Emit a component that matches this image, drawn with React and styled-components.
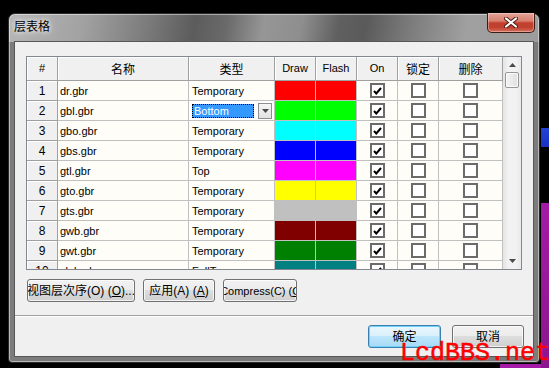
import React from "react";
import styled, { createGlobalStyle } from "styled-components";

const GlobalStyle = createGlobalStyle`
  * {
    box-sizing: border-box;
  }
  html, body {
    margin: 0;
    padding: 0;
    background: #000;
  }
  body {
    font-family: "Liberation Sans", "Noto Sans CJK SC", sans-serif;
  }
`;

const headers = [
  { label: "#", latin: true },
  { label: "名称" },
  { label: "类型" },
  { label: "Draw", latin: true },
  { label: "Flash", latin: true },
  { label: "On", latin: true },
  { label: "锁定" },
  { label: "删除" },
];

const layers = [
  { name: "dr.gbr", type: "Temporary", color: "#ff0000" },
  { name: "gbl.gbr", type: "Bottom", color: "#00ff00", editing: true },
  { name: "gbo.gbr", type: "Temporary", color: "#00ffff" },
  { name: "gbs.gbr", type: "Temporary", color: "#0000ff" },
  { name: "gtl.gbr", type: "Top", color: "#ff00ff" },
  { name: "gto.gbr", type: "Temporary", color: "#ffff00" },
  { name: "gts.gbr", type: "Temporary", color: "#c0c0c0" },
  { name: "gwb.gbr", type: "Temporary", color: "#800000" },
  { name: "gwt.gbr", type: "Temporary", color: "#008000" },
  { name: "slab.gbr", type: "FullTemp", color: "#008080" },
];

const CheckBox = ({ checked }) => (
  <Box>
    {checked && (
      <svg width="9" height="8" viewBox="0 0 9 8">
        <path d="M1 4 L3.3 6.5 L8 1" fill="none" stroke="#000" strokeWidth="2" />
      </svg>
    )}
  </Box>
);

const Arrow = ({ down }) => (
  <svg width="7" height="4" viewBox="0 0 7 4">
    <path d={down ? "M0 0 H7 L3.5 4 Z" : "M0 4 H7 L3.5 0 Z"} fill="#4a4a4a" />
  </svg>
);

const App = () => {
  return (
    <>
      <GlobalStyle />
      <Screen>
        <Window>
          <TitleBar>
            <Title>层表格</Title>
            <CloseButton>
              <svg width="14" height="11" viewBox="0 0 14 11">
                <path d="M2 1.5 L12 9.5 M12 1.5 L2 9.5" stroke="#4a1a12" strokeWidth="4" strokeLinecap="round" />
                <path d="M2 1.5 L12 9.5 M12 1.5 L2 9.5" stroke="#fff" strokeWidth="2.2" strokeLinecap="round" />
              </svg>
            </CloseButton>
          </TitleBar>
          <Client>
            <TopPane>
              <Table>
                <Grid>
                  {headers.map((h) => (
                    <HeadCell key={h.label} $latin={h.latin}>
                      {h.label}
                    </HeadCell>
                  ))}
                  {layers.map((l, i) => (
                    <React.Fragment key={l.name}>
                      <RowHead>{i + 1}</RowHead>
                      <Cell>{l.name}</Cell>
                      {l.editing ? (
                        <ComboCell>
                          <ComboText>{l.type}</ComboText>
                          <DropButton>
                            <Arrow down />
                          </DropButton>
                        </ComboCell>
                      ) : (
                        <Cell $pad={3}>{l.type}</Cell>
                      )}
                      <ColorCell $color={l.color} />
                      <ColorCell $color={l.color} />
                      <CheckCell>
                        <CheckBox checked />
                      </CheckCell>
                      <CheckCell>
                        <CheckBox />
                      </CheckCell>
                      <CheckCell>
                        <CheckBox />
                      </CheckCell>
                    </React.Fragment>
                  ))}
                </Grid>
                <ScrollBar>
                  <ScrollArrow $h={15}>
                    <Arrow />
                  </ScrollArrow>
                  <Thumb />
                  <Track />
                  <ScrollArrow $h={17}>
                    <Arrow down />
                  </ScrollArrow>
                </ScrollBar>
              </Table>
              <ButtonRow>
                <PushButton $w={108}>
                  视图层次序(O) (<u>O</u>)...
                </PushButton>
                <PushButton $w={72}>
                  应用(A) (<u>A</u>)
                </PushButton>
                <PushButton $w={74} $padLeft={4} $size={11}>
                  Compress(C) (<u>C</u>)
                </PushButton>
              </ButtonRow>
            </TopPane>
            <BottomPane>
              <PushButton $w={73} $default>
                确定
              </PushButton>
              <PushButton $w={72}>取消</PushButton>
            </BottomPane>
          </Client>
        </Window>
        <Watermark>LcdBBS.net</Watermark>
      </Screen>
    </>
  );
};

export default App;

const Screen = styled.div`
  position: relative;
  width: 549px;
  height: 368px;
  overflow: hidden;
  padding: 13px 0 0 8px;
  background:
    linear-gradient(#a31ba6, #8c168f) 541px 203px / 8px 165px no-repeat,
    linear-gradient(#a31ba6, #a31ba6) 500px 364px / 49px 4px no-repeat,
    linear-gradient(#2442d6, #1a30c0) 541px 128px / 8px 19px no-repeat,
    #000;
`;

const Window = styled.div`
  width: 532px;
  height: 350px;
  display: flex;
  flex-direction: column;
  padding: 0 5px 5px;
  border: 1px solid #2a2a2a;
  border-radius: 7px 7px 4px 4px;
  background:
    linear-gradient(100deg, #b6b6b6 0%, #a2a2a2 14%, #7c7c7c 26%, #5c5c5c 35%, #6a6a6a 41%, #969696 48%, #8e8e8e 55%, #606060 62%, #5a5a5a 67%, #7a7a7a 75%, #a0a0a0 86%, #9c9c9c 100%) 0 0 / 100% 28px no-repeat,
    #7c7c7c;
  box-shadow: inset 0 0 0 1px rgba(255, 255, 255, 0.45);
`;

const TitleBar = styled.div`
  height: 27px;
  display: flex;
  justify-content: space-between;
  align-items: flex-start;
`;

const Title = styled.div`
  margin-top: 5px;
  font: 12px/14px "Noto Sans CJK SC", sans-serif;
  color: #000;
  text-shadow: 0 0 4px #fff, 0 0 8px rgba(255, 255, 255, 0.8);
`;

const CloseButton = styled.div`
  width: 48px;
  height: 20px;
  margin: -1px -1px 0 0;
  border: 1px solid #3d1c16;
  border-top: none;
  border-radius: 0 0 5px 5px;
  background: linear-gradient(#e4a497 0%, #d88070 42%, #c3402e 52%, #c0402f 75%, #d8705c 100%);
  box-shadow: inset 0 0 0 1px rgba(255, 255, 255, 0.35);
  display: flex;
  align-items: center;
  justify-content: center;
`;

const Client = styled.div`
  flex: 1;
  display: flex;
  flex-direction: column;
  background: #f0f0f0;
  border: 1px solid #575757;
`;

const TopPane = styled.div`
  padding: 14px 11px 13px;
  border-bottom: 1px solid #a0a0a0;
`;

const Table = styled.div`
  width: 496px;
  height: 214px;
  display: flex;
  border: 1px solid #828790;
  overflow: hidden;
`;

const Grid = styled.div`
  display: grid;
  grid-template-columns: 31px 131px 86px 41px 41px 41px 41px 64px;
  grid-template-rows: 24px;
  grid-auto-rows: 20px;
  align-content: start;
  overflow: hidden;
`;

const HeadCell = styled.div`
  display: flex;
  align-items: center;
  justify-content: center;
  background: #f0f0f0;
  border-right: 1px solid #a0a0a0;
  border-bottom: 1px solid #a0a0a0;
  box-shadow: inset 1px 1px 0 #fff;
  font-size: ${(p) => (p.$latin ? "11px" : "12px")};
  font-family: ${(p) => (p.$latin ? '"Liberation Sans", sans-serif' : '"Noto Sans CJK SC", sans-serif')};
  color: #000;
  line-height: 1;
`;

const RowHead = styled(HeadCell)`
  font-family: "Liberation Sans", sans-serif;
  font-size: 12px;
`;

const Cell = styled.div`
  display: flex;
  align-items: center;
  padding-left: ${(p) => p.$pad || 2}px;
  background: #fffdf7;
  border-right: 1px solid #c0c0c0;
  border-bottom: 1px solid #c0c0c0;
  font-size: 11px;
  color: #000;
  white-space: nowrap;
  overflow: hidden;
`;

const ComboCell = styled(Cell)`
  padding-left: 3px;
  background: #fff;
`;

const ComboText = styled.span`
  width: 62px;
  height: 14px;
  padding-left: 1px;
  display: flex;
  align-items: center;
  background: #3399ff;
  color: #fff;
  border: 1px dotted #000;
  font-size: 11px;
`;

const DropButton = styled.span`
  width: 14px;
  height: 16px;
  margin-left: 4px;
  display: flex;
  align-items: center;
  justify-content: center;
  border: 1px solid #8e8e8e;
  background: linear-gradient(#f6f6f6, #e2e2e2);
`;

const ColorCell = styled.div`
  background: ${(p) => p.$color};
  border-right: 1px solid #c0c0c0;
  border-bottom: 1px solid #c0c0c0;
`;

const CheckCell = styled.div`
  display: flex;
  align-items: center;
  justify-content: center;
  background: #fffdf7;
  border-right: 1px solid #c0c0c0;
  border-bottom: 1px solid #c0c0c0;
`;

const Box = styled.span`
  width: 15px;
  height: 15px;
  display: flex;
  align-items: center;
  justify-content: center;
  border: 2px solid #6b6b6b;
  background: #fff;
`;

const ScrollBar = styled.div`
  width: 18px;
  display: flex;
  flex-direction: column;
  align-items: center;
  background: linear-gradient(90deg, #e4e4e4, #f2f2f2 30%, #f2f2f2 70%, #e9e9e9);
`;

const ScrollArrow = styled.div`
  height: ${(p) => p.$h}px;
  width: 100%;
  display: flex;
  align-items: center;
  justify-content: center;
`;

const Thumb = styled.div`
  width: 14px;
  height: 16px;
  border: 1px solid #979797;
  border-radius: 2px;
  background: linear-gradient(90deg, #f4f4f4, #e0e0e0);
  box-shadow: inset 0 0 0 1px rgba(255, 255, 255, 0.8);
`;

const Track = styled.div`
  flex: 1;
`;

const ButtonRow = styled.div`
  display: flex;
  gap: 8px;
  margin: 9px 0 0 1px;
`;

const PushButton = styled.button`
  width: ${(p) => p.$w}px;
  height: 23px;
  padding: 0 0 0 ${(p) => p.$padLeft || 0}px;
  display: flex;
  align-items: center;
  justify-content: center;
  overflow: hidden;
  white-space: nowrap;
  border: 1px solid ${(p) => (p.$default ? "#3c7fb1" : "#707070")};
  border-radius: 3px;
  background: ${(p) =>
    p.$default
      ? "linear-gradient(#eaf6fd 0%, #d9f0fc 49%, #bee6fd 50%, #a7d9f5 100%)"
      : "linear-gradient(#f2f2f2 0%, #ebebeb 49%, #dddddd 50%, #cfcfcf 100%)"};
  box-shadow: inset 0 0 0 1px ${(p) => (p.$default ? "#6fd2f8" : "rgba(255, 255, 255, 0.75)")};
  font: ${(p) => p.$size || 12}px/14px "Liberation Sans", "Noto Sans CJK SC", sans-serif;
  color: #000;

  u {
    text-decoration: underline;
  }
`;

const BottomPane = styled.div`
  flex: 1;
  display: flex;
  justify-content: flex-end;
  gap: 11px;
  padding: 8px 9px 0;
  border-top: 1px solid #fff;
`;

const Watermark = styled.div`
  position: absolute;
  left: 400px;
  top: 341px;
  font: 25px/25px "Liberation Mono", monospace;
  color: #ff0000;
  -webkit-text-stroke: 0.5px #ff0000;
  white-space: pre;
`;
